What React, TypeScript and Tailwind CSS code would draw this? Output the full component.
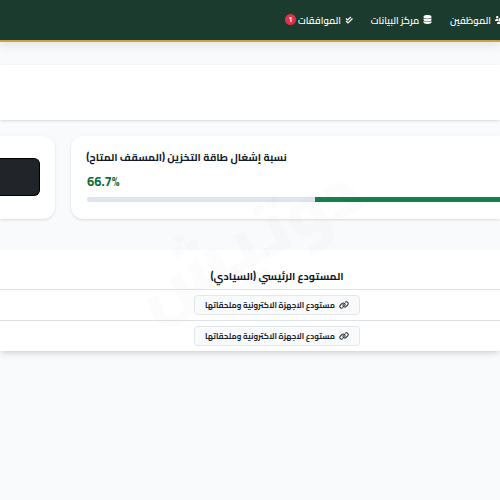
import type { ReactNode } from "react";
import { FaDatabase, FaLink, FaUsers } from "react-icons/fa6";

interface LabelProps {
  width: number;
  children: ReactNode;
}

function Label({ width, children }: LabelProps) {
  return (
    <span className="flex shrink-0 justify-center whitespace-nowrap" style={{ width }}>
      {children}
    </span>
  );
}

function ApprovalIcon() {
  return (
    <svg viewBox="0 0 16 16" className="size-2 shrink-0" fill="none" stroke="currentColor" strokeWidth="2.4">
      <path d="m2 5 3 3 7-6" />
      <path d="m2 10 4 4 9-9" />
    </svg>
  );
}

function NavBar() {
  return (
    <nav className="relative h-[42px] overflow-hidden border-b-2 border-[#c9a343] bg-[#1b3b2f] text-[9.6px] font-semibold text-white shadow-[0_3px_10px_rgba(0,0,0,0.1)]">
      <div className="flex h-10 w-full items-center">
        <div className="flex w-[50px] shrink-0 items-center justify-end gap-1">
          <FaUsers className="size-[10px] shrink-0" />
          <Label width={41}>الموظفين</Label>
        </div>
        <div className="mr-[18px] flex shrink-0 items-center gap-1">
          <FaDatabase className="size-[9px]" />
          <Label width={48}>مركز البيانات</Label>
        </div>
        <div className="mr-[18px] flex shrink-0 items-center">
          <ApprovalIcon />
          <span className="mr-1">
            <Label width={43}>الموافقات</Label>
          </span>
          <span className="mr-[2px] flex size-[11px] items-center justify-center rounded-full bg-[#dc3545] pt-px text-[7px] font-bold">
            1
          </span>
        </div>
      </div>
    </nav>
  );
}

function WarehouseTag() {
  return (
    <span className="flex h-5 w-[166px] items-center gap-1 rounded-[4px] border border-[#e2e7ec] bg-[#f8fafc] pr-2.5 text-[7.85px] font-bold text-[#212529]">
      <FaLink className="size-[10px] shrink-0" />
      <span className="pt-px">
        <Label width={130}>مستودع الاجهزة الاكترونية وملحقاتها</Label>
      </span>
    </span>
  );
}

export default function App() {
  return (
    <div
      dir="rtl"
      className="relative h-[500px] w-[500px] overflow-hidden bg-[#f8fafc] font-['Cairo','DejaVu_Sans',sans-serif] text-[#111827]"
    >
      <NavBar />
      <section className="mt-[23px] h-[55px] bg-white shadow-sm" />
      <div className="mt-4 flex h-[83px] gap-4">
        <section className="w-[429px] shrink-0 rounded-l-xl bg-white pt-[14px] pl-4 shadow-sm">
          <div className="flex h-4 items-center justify-end text-[10.5px] font-bold">
            <Label width={199}>نسبة إشغال طاقة التخزين (المسقف المتاح)</Label>
          </div>
          <div dir="ltr" className="mt-[5px] h-5 text-[13px] leading-5 font-bold text-[#126b36]">
            66.7%
          </div>
          <div className="mt-[6px] flex h-[5px] overflow-hidden rounded-l-full bg-[#dfe5ee]">
            <div className="w-[185px] bg-[#12814a]" />
          </div>
        </section>
        <section className="w-[55px] shrink-0 rounded-r-xl bg-white pt-[22px] pr-[15px] shadow-sm">
          <div className="h-[38px] rounded-r-md border border-l-0 border-black bg-[#212529]" />
        </section>
      </div>
      <section className="mt-[31px] h-[101px] bg-white shadow-md">
        <div className="flex h-[40px] border-b border-[#dee2e6] pt-[19px] pr-[157px] text-[10.5px] font-bold">
          <Label width={132}>المستودع الرئيسي (السيادي)</Label>
        </div>
        <div className="flex h-[31px] items-center border-b border-[#dee2e6] pr-[140px]">
          <WarehouseTag />
        </div>
        <div className="flex h-[30px] items-center pr-[140px]">
          <WarehouseTag />
        </div>
      </section>
      <div className="pointer-events-none absolute top-[175px] left-[127px] flex h-[130px] w-[240px] -rotate-[28deg] items-center justify-center text-[71px] font-black text-black/[0.012]">
        دوتيش
      </div>
    </div>
  );
}
